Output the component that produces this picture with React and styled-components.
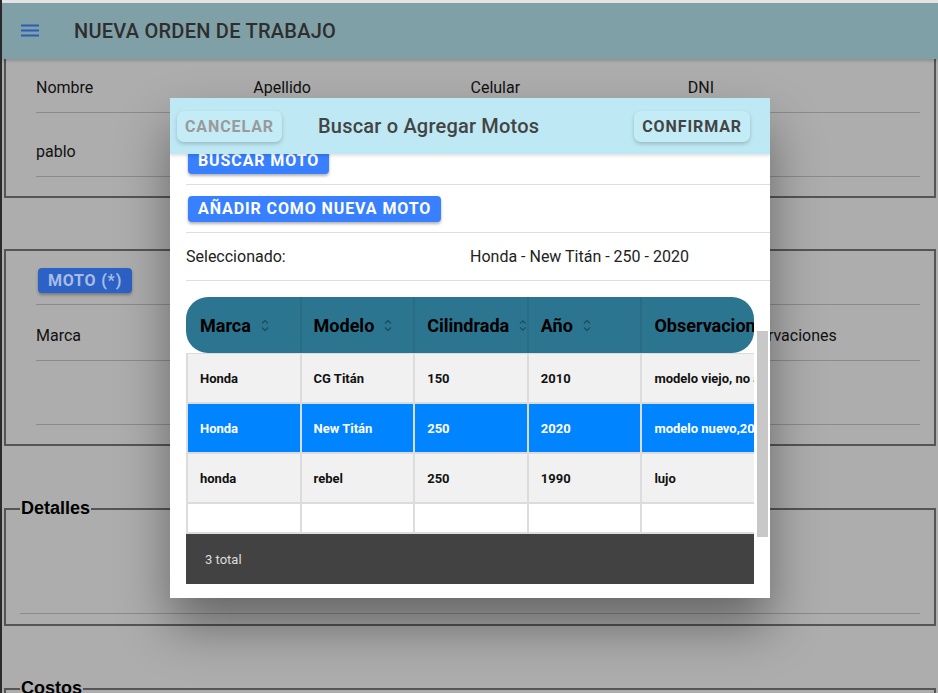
import { useLayoutEffect, useRef } from 'react'
import styled, { createGlobalStyle } from 'styled-components'

const GlobalStyle = createGlobalStyle`
  html, body {
    margin: 0;
    height: 100%;
    overflow: hidden;
  }
  body {
    font-family: Roboto, "Liberation Sans", sans-serif;
    background: #2b2b2b;
  }
  #root {
    height: 100%;
  }
`

const motos = [
  { marca: 'Honda', modelo: 'CG Titán', cc: '150', anio: '2010', obs: 'modelo viejo, no arranca en frío' },
  { marca: 'Honda', modelo: 'New Titán', cc: '250', anio: '2020', obs: 'modelo nuevo,2020 full', selected: true },
  { marca: 'honda', modelo: 'rebel', cc: '250', anio: '1990', obs: 'lujo' },
]

const columns = ['Marca', 'Modelo', 'Cilindrada', 'Año', 'Observaciones']

function SortIcon() {
  return (
    <svg width="8" height="15" viewBox="0 0 8 15">
      <polyline points="1,5.5 4,2.5 7,5.5" fill="none" stroke="rgba(0,0,0,0.35)" strokeWidth="1.3" />
      <polyline points="1,9.5 4,12.5 7,9.5" fill="none" stroke="rgba(0,0,0,0.35)" strokeWidth="1.3" />
    </svg>
  )
}

function MenuIcon() {
  return (
    <svg width="24" height="24" viewBox="0 0 24 24">
      <rect x="3" y="5.5" width="18" height="2" fill="#2a5cb8" />
      <rect x="3" y="10.5" width="18" height="2" fill="#2a5cb8" />
      <rect x="3" y="15.5" width="18" height="2" fill="#2a5cb8" />
    </svg>
  )
}

function App() {
  const pageRef = useRef(null)
  const modalRef = useRef(null)
  const buscarRef = useRef(null)

  useLayoutEffect(() => {
    // the page and the modal are both scrolled a bit when the shot was taken
    pageRef.current.scrollTop = 28
    modalRef.current.scrollTop = buscarRef.current.offsetTop + 17
  }, [])

  return (
    <Screen>
      <GlobalStyle />
      <Frame>
        <Header>
          <MenuButton><MenuIcon /></MenuButton>
          <PageTitle>NUEVA ORDEN DE TRABAJO</PageTitle>
        </Header>

        <PageScroll ref={pageRef}>
          <Fieldset $pb={19}>
            <Legend>Cliente</Legend>
            <Row $cols={4} $h={61} $pt={11}>
              <span>Nombre</span><span>Apellido</span><span>Celular</span><span>DNI</span>
            </Row>
            <Row $cols={4} $h={64} $pt={13}>
              <span>pablo</span><span></span><span></span><span></span>
            </Row>
          </Fieldset>

          <Fieldset $mt={51} $pb={19}>
            <Row $cols={1} $h={54} $pt={6}>
              <div><PageButton>MOTO (*)</PageButton></div>
            </Row>
            <Row $cols={5} $h={56} $pt={5}>
              {columns.map((c) => <span key={c}>{c}</span>)}
            </Row>
            <Row $cols={5} $h={64} $pt={13}>
              <span></span><span></span><span></span><span></span><span></span>
            </Row>
          </Fieldset>

          <Fieldset $mt={52} $pb={10}>
            <Legend>Detalles</Legend>
            <TextAreaItem />
          </Fieldset>

          <Fieldset $mt={52} $pb={10}>
            <Legend>Costos</Legend>
            <Row $cols={2} $h={56} $pt={5}>
              <span>Mano de obra</span><span>Repuestos</span>
            </Row>
            <Row $cols={2} $h={64} $pt={13}>
              <span></span><span></span>
            </Row>
          </Fieldset>
        </PageScroll>

        <Backdrop>
          <Modal>
            <Toolbar>
              <HeadButton $color="#9a9a9a">CANCELAR</HeadButton>
              <ModalTitle>Buscar o Agregar Motos</ModalTitle>
              <HeadButton $color="#444">CONFIRMAR</HeadButton>
            </Toolbar>

            <ModalBody>
              <Scroller ref={modalRef}>
                <Item><FieldLabel>Marca</FieldLabel></Item>
                <Item><FieldLabel>Modelo</FieldLabel></Item>
                <Item><FieldLabel>Cilindrada</FieldLabel></Item>
                <Item><FieldLabel>Año</FieldLabel></Item>
                <Item ref={buscarRef}><BlueButton>BUSCAR MOTO</BlueButton></Item>
                <Item><BlueButton>AÑADIR COMO NUEVA MOTO</BlueButton></Item>
                <Item $split>
                  <span>Seleccionado:</span>
                  <span>Honda - New Titán - 250 - 2020</span>
                </Item>

                <TableWrap>
                  <TableHead>
                    {columns.map((c, i) => (
                      <HeadCell key={c} $first={i === 0}>
                        {c}
                        {i < 4 && <SortIcon />}
                      </HeadCell>
                    ))}
                  </TableHead>
                  <TableBody>
                    {motos.map((m) => (
                      <BodyRow key={m.modelo} $selected={m.selected}>
                        <Cell>{m.marca}</Cell>
                        <Cell>{m.modelo}</Cell>
                        <Cell>{m.cc}</Cell>
                        <Cell>{m.anio}</Cell>
                        <Cell>{m.obs}</Cell>
                      </BodyRow>
                    ))}
                    <BodyRow $empty>
                      <Cell /><Cell /><Cell /><Cell /><Cell />
                    </BodyRow>
                  </TableBody>
                  <TableFooter>3 total</TableFooter>
                </TableWrap>
                <Spacer />
              </Scroller>
              <Thumb />
            </ModalBody>
          </Modal>
        </Backdrop>
      </Frame>
    </Screen>
  )
}

const Screen = styled.div`
  display: flex;
  height: 100vh;
`

const Frame = styled.div`
  position: relative;
  flex: 1;
  margin-left: 2px;
  display: flex;
  flex-direction: column;
  border-top: 3px solid #e4e4e4;
  min-width: 0;
`

const Header = styled.header`
  position: relative;
  z-index: 1;
  height: 56px;
  flex-shrink: 0;
  display: flex;
  align-items: center;
  background: #80a0a7;
  box-shadow: 0 2px 3px rgba(0, 0, 0, 0.18);
`

const MenuButton = styled.div`
  display: flex;
  margin-left: 16px;
`

const PageTitle = styled.div`
  margin-left: 32px;
  font-size: 20px;
  font-weight: 500;
  color: #2e2e2e;
  letter-spacing: 0.25px;
`

const PageScroll = styled.div`
  flex: 1;
  overflow: hidden;
  background: #adadad;
  color: #111;
  font-size: 16px;
`

const Fieldset = styled.fieldset`
  margin: ${(p) => p.$mt || 0}px 2px 0;
  border: 2px solid #555;
  padding: 0 14px ${(p) => p.$pb}px;
  min-width: 0;
`

const Legend = styled.legend`
  padding: 0 1px;
  font-family: "Liberation Sans", Arial, sans-serif;
  font-weight: 700;
  font-size: 18px;
  line-height: 21px;
  color: #000;
`

const Row = styled.div`
  box-sizing: border-box;
  height: ${(p) => p.$h}px;
  padding-top: ${(p) => p.$pt}px;
  margin-left: 16px;
  padding-right: 15px;
  display: grid;
  grid-template-columns: repeat(${(p) => p.$cols}, 1fr);
  align-items: center;
  border-bottom: 1px solid #8b8b8b;
`

const PageButton = styled.span`
  display: inline-flex;
  align-items: center;
  height: 25px;
  margin-left: 2px;
  padding: 0 10px;
  border-radius: 4px;
  background: #2c62c5;
  color: #a9bde3;
  font-size: 16px;
  font-weight: 700;
  letter-spacing: 0.8px;
  box-shadow: 0 2px 3px rgba(0, 0, 0, 0.3);
`

const TextAreaItem = styled.div`
  height: 95px;
  box-sizing: border-box;
  border-bottom: 1px solid #8b8b8b;
`

const Backdrop = styled.div`
  position: absolute;
  inset: 0;
  display: flex;
  align-items: center;
  justify-content: center;
  z-index: 2;
`

const Modal = styled.div`
  width: 600px;
  height: 500px;
  background: #fff;
  display: flex;
  flex-direction: column;
  overflow: hidden;
  box-shadow: 0 28px 48px rgba(0, 0, 0, 0.4);
`

const Toolbar = styled.div`
  position: relative;
  z-index: 1;
  height: 56px;
  flex-shrink: 0;
  display: flex;
  align-items: center;
  padding: 0 20px 0 7px;
  background: #bee9f4;
  box-shadow: 0 2px 3px rgba(0, 0, 0, 0.12);
`

const HeadButton = styled.button`
  height: 31px;
  padding: 0 8px;
  border: none;
  border-radius: 7px;
  background: #c3ecf6;
  color: ${(p) => p.$color};
  font-family: Roboto, sans-serif;
  font-size: 16px;
  font-weight: 700;
  letter-spacing: 0.9px;
  box-shadow: 0 2px 4px rgba(0, 0, 0, 0.2);
`

const ModalTitle = styled.div`
  flex: 1;
  padding-left: 36px;
  font-size: 20px;
  font-weight: 500;
  color: #444;
  letter-spacing: 0.2px;
`

const ModalBody = styled.div`
  position: relative;
  flex: 1;
  min-height: 0;
`

const Scroller = styled.div`
  position: relative;
  height: 100%;
  overflow: hidden;
`

const Item = styled.div`
  box-sizing: border-box;
  height: 48px;
  margin-left: 16px;
  padding-right: 16px;
  display: ${(p) => (p.$split ? 'grid' : 'flex')};
  grid-template-columns: 1fr 1fr;
  align-items: center;
  border-bottom: 1px solid #dedede;
  font-size: 16px;
  color: #222;
`

const FieldLabel = styled.span`
  color: #666;
`

const BlueButton = styled.span`
  display: inline-flex;
  align-items: center;
  height: 26px;
  margin-left: 2px;
  padding: 0 10px;
  border-radius: 4px;
  background: #3880ff;
  color: #fff;
  font-size: 16px;
  font-weight: 700;
  letter-spacing: 0.9px;
  box-shadow: 0 2px 3px rgba(0, 0, 0, 0.3);
`

const TableWrap = styled.div`
  margin: 16px 16px 0;
  overflow: hidden;
`

const gridCols = '113.6px 113.6px 113.6px 113.6px 260px'

const TableHead = styled.div`
  height: 56px;
  display: grid;
  grid-template-columns: ${gridCols};
  border-radius: 22px;
  overflow: hidden;
  background: #2c7590;
`

const HeadCell = styled.div`
  display: flex;
  align-items: center;
  gap: 10px;
  padding-left: ${(p) => (p.$first ? 14 : 12)}px;
  border-left: ${(p) => (p.$first ? 'none' : '2px solid #286c85')};
  overflow: hidden;
  white-space: nowrap;
  font-size: 18px;
  font-weight: 700;
  color: #000;
`

const TableBody = styled.div`
  border-top: 1px solid #dcdcdc;
  width: max-content;
`

const BodyRow = styled.div`
  display: grid;
  grid-template-columns: ${gridCols};
  height: ${(p) => (p.$empty ? 30 : 50)}px;
  background: ${(p) => (p.$selected ? '#0084ff' : p.$empty ? '#fff' : '#f1f1f1')};
  color: ${(p) => (p.$selected ? '#fff' : '#111')};
`

const Cell = styled.div`
  box-sizing: border-box;
  display: flex;
  align-items: center;
  padding-left: 12px;
  border-left: 2px solid #dcdcdc;
  border-bottom: 2px solid #dcdcdc;
  overflow: hidden;
  white-space: nowrap;
  font-size: 13px;
  font-weight: 700;
`

const TableFooter = styled.div`
  height: 50px;
  display: flex;
  align-items: center;
  padding-left: 19px;
  background: #424242;
  color: #ddd;
  font-size: 13px;
`

const Spacer = styled.div`
  height: 140px;
`

const Thumb = styled.div`
  position: absolute;
  right: 2px;
  top: 177px;
  width: 11px;
  height: 206px;
  background: #c8c8c8;
`

export default App
